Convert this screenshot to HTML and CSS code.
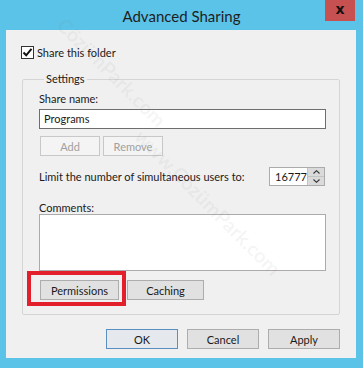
FILE: index.html
```html
<!DOCTYPE html>
<html lang="en">
<head>
    <meta charset="UTF-8">
    <title>Advanced Sharing</title>
    <link rel="stylesheet" href="styles.css">
</head>
<body>
    <div class="window">
        <div class="titlebar">
            <span class="title">Advanced Sharing</span>
            <span class="close">x</span>
        </div>

        <div class="client">
            <label class="share-row">
                <span class="checkbox">
                    <svg width="11" height="11" viewBox="0 0 11 11"><path d="M1.5 5.5 L4.2 8.3 L9.5 1.8" fill="none" stroke="#111" stroke-width="2"/></svg>
                </span>
                Share this folder
            </label>

            <fieldset class="settings">
                <legend>Settings</legend>

                <div class="label">Share name:</div>
                <div class="textbox">Programs</div>

                <div class="btn-row">
                    <span class="btn disabled">Add</span>
                    <span class="btn disabled">Remove</span>
                </div>

                <div class="limit-row">
                    <span>Limit the number of simultaneous users to:</span>
                    <span class="spinner">
                        <span class="spin-value">16777</span>
                        <span class="spin-btns">
                            <span class="spin-up"><svg width="7" height="4" viewBox="0 0 7 4"><path d="M0.5 3.5 L3.5 0.7 L6.5 3.5" fill="none" stroke="#333" stroke-width="1.1"/></svg></span>
                            <span class="spin-down"><svg width="7" height="4" viewBox="0 0 7 4"><path d="M0.5 0.5 L3.5 3.3 L6.5 0.5" fill="none" stroke="#333" stroke-width="1.1"/></svg></span>
                        </span>
                    </span>
                </div>

                <div class="label comments-label">Comments:</div>
                <div class="textarea"></div>

                <div class="btn-row bottom-btns">
                    <span class="highlight-wrap">
                        <span class="btn">Permissions</span>
                        <span class="highlight"></span>
                    </span>
                    <span class="btn">Caching</span>
                </div>
            </fieldset>

            <div class="dialog-btns">
                <span class="btn default">OK</span>
                <span class="btn">Cancel</span>
                <span class="btn">Apply</span>
            </div>
        </div>

        <div class="watermark wm1">www.CözümPark.com</div>
        <div class="watermark wm2">CözümPark.com</div>
    </div>
</body>
</html>
```

FILE: styles.css
```css
* {
    margin: 0;
    padding: 0;
    box-sizing: border-box;
}
body {
    background-color: #5bc3e7;
    font-family: Lato, "Open Sans", sans-serif;
    font-size: 11px;
    color: #1a1a1a;
    width: 363px;
    height: 368px;
    overflow: hidden;
}
.window {
    position: relative;
    width: 363px;
    height: 368px;
    overflow: hidden;
}
.titlebar {
    position: relative;
    height: 30px;
    display: flex;
    justify-content: center;
    align-items: center;
}
.title {
    font-size: 15px;
    color: #1e1e1e;
    padding-top: 1px;
}
.close {
    position: absolute;
    top: 0;
    right: 8px;
    width: 30px;
    height: 21px;
    background-color: #c75050;
    color: #111;
    font-weight: bold;
    font-size: 14px;
    line-height: 19px;
    text-align: center;
    font-family: "DejaVu Sans", sans-serif;
}
.client {
    margin: 0 7px 0 6px;
    height: 328px;
    background-color: #f0f0f0;
    padding: 16px 16px 0 16px;
}
.share-row {
    display: flex;
    align-items: center;
    gap: 3px;
    height: 13px;
    margin-left: -1px;
    line-height: 13px;
}
.checkbox {
    width: 13px;
    height: 13px;
    border: 1px solid #333;
    background-color: #fff;
    display: flex;
    align-items: center;
    justify-content: center;
}
.settings {
    margin-top: 13px;
    border: 1px solid #d5d5d5;
    border-radius: 2px;
    padding: 6px 13px 12px 16px;
    height: 243px;
}
.settings legend {
    line-height: 14px;
    padding: 0 2px;
    margin-left: 5px;
}
.label {
    line-height: 14px;
}
.textbox {
    margin-top: 3px;
    height: 20px;
    border: 1px solid #6e6e6e;
    background-color: #fff;
    padding-left: 4px;
    line-height: 18px;
}
.btn-row {
    display: flex;
    gap: 3px;
    margin-top: 7px;
    margin-left: 1px;
}
.btn {
    display: inline-flex;
    align-items: center;
    justify-content: center;
    width: 60px;
    height: 20px;
    border: 1px solid #adadad;
    background-color: #e1e1e1;
    color: #1a1a1a;
}
.btn.disabled {
    border-color: #c8c8c8;
    background-color: #f4f4f4;
    color: #a0a0a0;
}
.limit-row {
    display: flex;
    justify-content: space-between;
    align-items: center;
    margin-top: 11px;
    height: 19px;
    white-space: nowrap;
}
.spinner {
    display: flex;
    height: 19px;
    width: 56px;
    border: 1px solid #ababab;
    background-color: #fff;
    margin-right: 1px;
}
.spin-value {
    flex: 1;
    line-height: 17px;
    padding-left: 5px;
}
.spin-btns {
    width: 17px;
    display: flex;
    flex-direction: column;
    background-color: #dadada;
    border-left: 1px solid #c4c4c4;
}
.spin-up, .spin-down {
    flex: 1;
    display: flex;
    align-items: center;
    justify-content: center;
}
.spin-up {
    border-bottom: 1px solid #c4c4c4;
}
.comments-label {
    margin-top: 15px;
    line-height: 13px;
}
.textarea {
    height: 57px;
    border: 1px solid #ababab;
    background-color: #fff;
}
.bottom-btns {
    margin-top: 9px;
    gap: 8px;
}
.bottom-btns .btn {
    width: 79px;
}
.bottom-btns .btn:last-child {
    width: 77px;
}
.highlight-wrap {
    position: relative;
    display: inline-flex;
}
.highlight {
    position: absolute;
    top: -9px;
    left: -13px;
    right: -7px;
    bottom: -6px;
    border: 4px solid #e21f2b;
}
.dialog-btns {
    display: flex;
    justify-content: flex-end;
    gap: 9px;
    margin-top: 14px;
}
.dialog-btns .btn {
    width: 72px;
}
.btn.default {
    border-color: #5a8fbf;
    background-color: #e5e8ec;
}
.watermark {
    position: absolute;
    font-size: 20px;
    font-weight: bold;
    color: rgba(110, 110, 110, 0.07);
    transform: rotate(45deg);
    white-space: nowrap;
    pointer-events: none;
}
.wm1 {
    top: 190px;
    left: 110px;
}
.wm2 {
    top: 60px;
    left: 40px;
}
```
